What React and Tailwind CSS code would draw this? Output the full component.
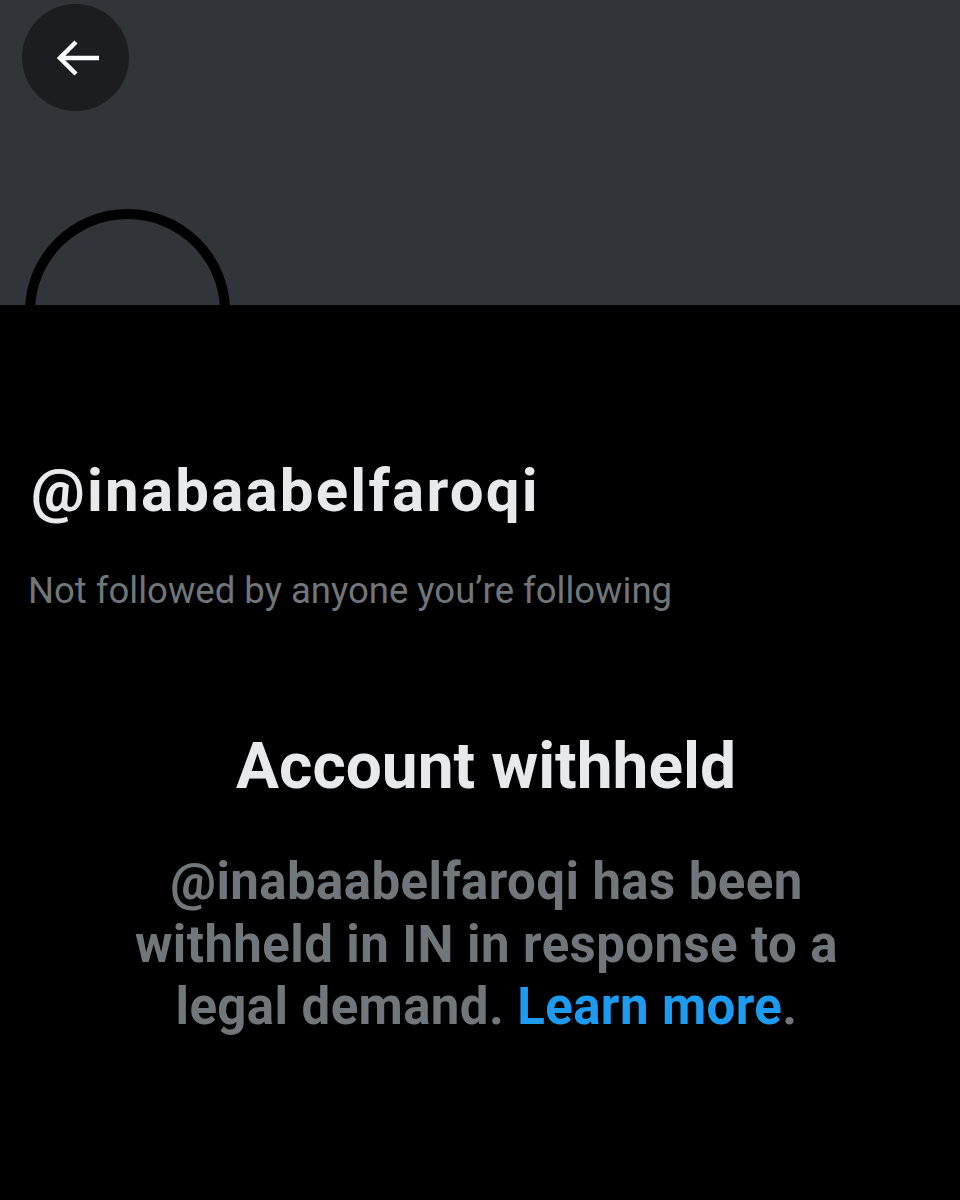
import React from "react";

const BackArrow = () => (
  <svg width="48" height="48" viewBox="0 0 48 48" fill="none">
    <path d="M47 24H10" stroke="white" strokeWidth="4.5" />
    <path d="M24 8L8 24L24 40" stroke="white" strokeWidth="4.5" strokeLinejoin="miter" />
  </svg>
);

const App = () => {
  return (
    <div className="w-[960px] h-[1200px] bg-black overflow-hidden" style={{ fontFamily: "Roboto, 'Liberation Sans', sans-serif" }}>
      {/* banner, avatar clipped at its bottom edge */}
      <div className="relative h-[305px] bg-[#313438] overflow-hidden">
        <button className="absolute left-[22px] top-[4px] w-[107px] h-[107px] rounded-full bg-[#1b1d20] flex items-center justify-center">
          <BackArrow />
        </button>
        <div className="absolute left-[25px] top-[209px] w-[205px] h-[205px] rounded-full border-[10px] border-black bg-[#313438]" />
      </div>

      <div className="pt-[156px] px-[31px]">
        <h1 className="text-[60px] leading-[60px] font-bold text-[#e7e9ea] tracking-[2.2px]">@inabaabelfaroqi</h1>
        <p className="mt-[48px] text-[36.5px] leading-[44px] text-[#71767b] -ml-[3px]">
          Not followed by anyone you’re following
        </p>
      </div>

      <div className="mt-[118px] flex flex-col items-center text-center">
        <h2 className="text-[64px] leading-[72px] font-bold text-[#e7e9ea] pl-[12px]">Account withheld</h2>
        <p className="mt-[48px] pl-[13px] text-[51px] leading-[62.5px] font-bold text-[#71767b] tracking-[0.4px]">
          @inabaabelfaroqi has been
          <br />
          withheld in IN in response to a
          <br />
          legal demand. <span className="text-[#1d9bf0]">Learn more</span>.
        </p>
      </div>
    </div>
  );
};

export default App;
